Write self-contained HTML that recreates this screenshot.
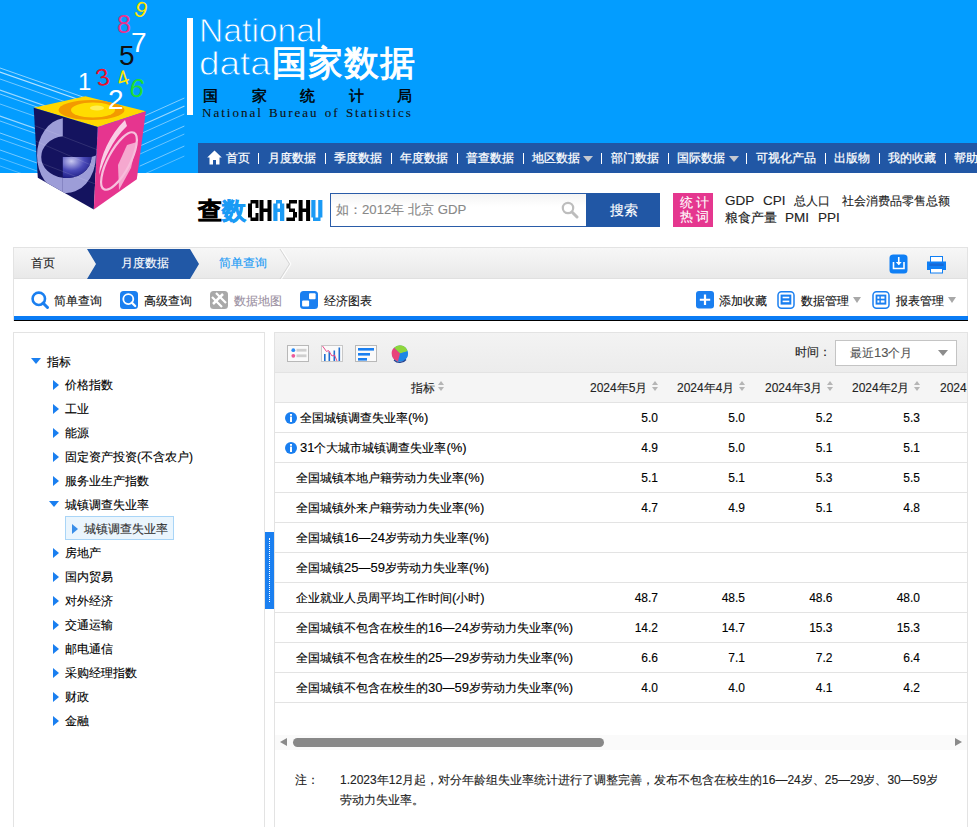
<!DOCTYPE html>
<html><head><meta charset="utf-8">
<style>
*{box-sizing:border-box;margin:0;padding:0}
html,body{width:977px;height:827px;overflow:hidden;background:#fff}
body{position:relative;font-family:"Liberation Sans",sans-serif;font-size:12px;color:#222}
.a,.c,.ti{-webkit-text-stroke:0.12px currentColor}
.a{position:absolute;white-space:nowrap}
#hdr{position:absolute;left:0;top:0;width:977px;height:173px;background:#039dff;z-index:3}
#nav{position:absolute;left:198px;top:143px;width:779px;height:30px;background:#2157a5;color:#fff;font-size:12px;line-height:30px}
#nav span{position:absolute;top:0;white-space:nowrap;-webkit-text-stroke:0.25px #fff}
.arw{position:absolute;top:13px;width:0;height:0;border-left:5px solid transparent;border-right:5px solid transparent;border-top:6px solid #c4c8d0}
/* breadcrumb */
#bc{position:absolute;left:13px;top:247px;width:955px;height:74px;border:1px solid #e3e3e3;border-bottom:none}
#bcbar{position:absolute;left:0;top:0;width:953px;height:31px;background:linear-gradient(#f7f7f7,#e9e9e9);border-bottom:1px solid #e0e0e0}
#tb{position:absolute;left:0;top:31px;width:953px;height:38px;background:#fff}
#bl{position:absolute;left:0;top:68px;width:954px;height:4px;background:#0a7cf5}
#bk{position:absolute;left:0;top:72px;width:954px;height:1px;background:#000}
/* left tree */
#lp{position:absolute;left:13px;top:332px;width:252px;height:500px;border:1px solid #e3e3e3;background:#fff}
.ti{position:absolute;font-size:12px;line-height:16px;color:#000;white-space:nowrap}
.dt{position:absolute;width:0;height:0;border-left:5.5px solid transparent;border-right:5.5px solid transparent;border-top:6px solid #1a7ff0}
.tri{position:absolute;width:0;height:0;border-top:5.5px solid transparent;border-bottom:5.5px solid transparent;border-left:6px solid #1a7ff0}
/* right panel */
#rp{position:absolute;left:274px;top:332px;width:694px;height:500px;border:1px solid #e3e3e3;border-bottom:none;background:#fff;overflow:hidden}
#rtb{position:absolute;left:0;top:0;width:692px;height:40px;background:linear-gradient(#f3f3f3,#ececec);border-bottom:1px solid #e3e3e3}
#th{position:absolute;left:0;top:40px;width:692px;height:30px;background:#f5f5f5;border-bottom:1px solid #e3e3e3}
.row{position:absolute;left:0;width:692px;height:30px;border-bottom:1px solid #e3e3e3}
.c{position:absolute;font-size:12px;line-height:30px;color:#000}
</style></head><body>
<div id="hdr">
<svg class="a" style="left:0;top:0" width="200" height="173" viewBox="0 0 200 173">
  <g stroke="#fff" stroke-linecap="round" fill="none"><path d="M0 68.0 L120 110.0" stroke-opacity="0.55" stroke-width="1.0"/><path d="M0 72.0 L120 114.0" stroke-opacity="0.70" stroke-width="1.2"/><path d="M0 79.0 L120 121.0" stroke-opacity="0.45" stroke-width="1.0"/><path d="M0 90.0 L120 132.0" stroke-opacity="0.60" stroke-width="1.2"/><path d="M0 94.0 L120 136.0" stroke-opacity="0.50" stroke-width="1.0"/><path d="M0 104.0 L120 146.0" stroke-opacity="0.40" stroke-width="1.0"/><path d="M0 116.0 L120 158.0" stroke-opacity="0.60" stroke-width="1.2"/><path d="M0 121.0 L120 163.0" stroke-opacity="0.45" stroke-width="1.0"/><path d="M0 133.0 L120 175.0" stroke-opacity="0.50" stroke-width="1.0"/><path d="M0 139.0 L120 181.0" stroke-opacity="0.40" stroke-width="1.0"/><path d="M0 150.0 L120 192.0" stroke-opacity="0.45" stroke-width="1.0"/><path d="M0 158.0 L120 200.0" stroke-opacity="0.35" stroke-width="1.0"/><path d="M0 166.0 L120 208.0" stroke-opacity="0.30" stroke-width="1.0"/><path d="M140 118.0 L184 98.2" stroke-opacity="0.50" stroke-width="1.0"/><path d="M140 126.0 L184 106.2" stroke-opacity="0.60" stroke-width="1.2"/><path d="M140 134.0 L184 114.2" stroke-opacity="0.45" stroke-width="1.0"/><path d="M140 146.0 L184 126.2" stroke-opacity="0.50" stroke-width="1.0"/><path d="M140 154.0 L184 134.2" stroke-opacity="0.40" stroke-width="1.0"/><path d="M140 166.0 L184 146.2" stroke-opacity="0.45" stroke-width="1.0"/><path d="M140 176.0 L184 156.2" stroke-opacity="0.35" stroke-width="1.0"/></g>
</svg>
<svg class="a" style="left:0;top:0;z-index:2" width="180" height="215" viewBox="0 0 180 215">
  <defs>
    <clipPath id="lf"><polygon points="33.7,107.8 97.8,127 93.8,209.4 37.8,177.7"/></clipPath>
    <clipPath id="rf"><polygon points="97.8,127 145.9,111.2 136.8,179.2 93.8,209.4"/></clipPath>
    <clipPath id="tf"><polygon points="33.7,107.8 85.4,96.3 145.9,111.2 97.8,127"/></clipPath>
    <radialGradient id="bq" cx="0.3" cy="0.2" r="0.9"><stop offset="0" stop-color="#c8c8f0"/><stop offset="0.5" stop-color="#4a4ab8"/><stop offset="1" stop-color="#15157a"/></radialGradient>
  </defs>
  <polygon points="33.7,107.8 85.4,96.3 145.9,111.2 97.8,127" fill="#ffd800"/>
  <g clip-path="url(#tf)">
    <ellipse cx="91.5" cy="110" rx="33" ry="10" fill="#f39a00"/>
    <ellipse cx="93" cy="110" rx="22" ry="7.5" fill="#ffdc00"/>
    <path d="M84 99 L100 99 L104 108 L84 108 Z" fill="#ffd800" opacity="0"/>
    <ellipse cx="97" cy="108" rx="7" ry="2.5" fill="#ffee55"/>
  </g>
  <polygon points="33.7,107.8 97.8,127 93.8,209.4 37.8,177.7" fill="#14135f"/>
  <g clip-path="url(#lf)">
    <path d="M62.8 118.3 A29.5 37.5 0 0 0 62.8 192.7 L62.8 177.8 A25 21 0 0 1 62.8 136.2 Z" fill="#9d9dd8"/>
    <path d="M62.8 192.7 A29.5 37.5 0 0 0 96 155.5 L91.5 157 A25 21 0 0 1 62.8 177.8 Z" fill="#9d9dd8"/>
    <path d="M62.8 157 L91.5 157 A25 21 0 0 1 62.8 177.8 Z" fill="url(#bq)"/>
    <path d="M33 125 L98 150 M33 140 L98 168 M33 160 L98 185" stroke="#fff" stroke-opacity="0.12" stroke-width="1"/>
  </g>
  <polygon points="97.8,127 145.9,111.2 136.8,179.2 93.8,209.4" fill="#e6358f"/>
  <g clip-path="url(#rf)">
    <ellipse cx="119" cy="161" rx="11" ry="32" transform="rotate(28 119 161)" fill="none" stroke="#f7c0dd" stroke-width="2.2"/>
    <path d="M125 120 C110 135 100 155 99 175 C104 160 112 140 127 126 Z" fill="#f9cfe5"/>
    <path d="M127 145 L137 142 L131 168 L119 190 L118 165 Z" fill="#f7bcdb" opacity="0.85"/>
  </g>
  <g font-family="Liberation Sans" stroke="none">
    <text x="135" y="17" font-size="22" fill="#ffe600" transform="rotate(20 141 9)">9</text>
    <text x="117" y="33" font-size="25" fill="#e6338f">8</text>
    <text x="131" y="52" font-size="28" fill="#fff">7</text>
    <text x="119" y="65" font-size="28" fill="#111">5</text>
    <text x="78" y="90" font-size="24" fill="#fff">1</text>
    <text x="96" y="85" font-size="24" fill="#e8112d" transform="rotate(-12 105 77)">3</text>
    <text x="117" y="85" font-size="21" fill="#ffe600" transform="rotate(-18 124 78)">4</text>
    <text x="130" y="97" font-size="26" fill="#22dd33" transform="rotate(12 137 88)">6</text>
    <text x="108" y="109" font-size="28" fill="#fff" stroke="none">2</text>
  </g>
</svg>
  <div class="a" style="left:187px;top:18px;width:6px;height:97px;background:#fff"></div>
  <div class="a" style="left:199px;top:12px;font-size:34px;line-height:36px;color:#fff;transform:scaleX(0.99);transform-origin:0 0;-webkit-text-stroke:0.9px #039dff">National</div>
  <div class="a" style="left:199px;top:45px;font-size:34px;line-height:36px;color:#fff;transform:scaleX(1.085);transform-origin:0 0;-webkit-text-stroke:0.9px #039dff">data</div>
  <div class="a" style="left:272px;top:43px;font-size:35px;line-height:40px;color:#fff;font-weight:normal;letter-spacing:1px;-webkit-text-stroke:1px #fff">国家数据</div>
  <div class="a" style="left:203px;top:86px;font-family:'Liberation Serif',serif;font-size:15px;line-height:20px;color:#000;letter-spacing:33.6px;-webkit-text-stroke:0.45px #000">国家统计局</div>
  <div class="a" style="left:202px;top:105px;font-family:'Liberation Serif',serif;font-size:13px;line-height:16px;color:#111;letter-spacing:2px;word-spacing:1px">National Bureau of Statistics</div>
  <div id="nav"><span style="left:28px">首页</span><span style="left:60px;width:1px;top:10px;height:11px;background:#fff"></span><span style="left:70px">月度数据</span><span style="left:127px;width:1px;top:10px;height:11px;background:#fff"></span><span style="left:136px">季度数据</span><span style="left:193px;width:1px;top:10px;height:11px;background:#fff"></span><span style="left:202px">年度数据</span><span style="left:259px;width:1px;top:10px;height:11px;background:#fff"></span><span style="left:268px">普查数据</span><span style="left:325px;width:1px;top:10px;height:11px;background:#fff"></span><span style="left:334px">地区数据</span><span style="left:403px;width:1px;top:10px;height:11px;background:#fff"></span><span style="left:413px">部门数据</span><span style="left:470px;width:1px;top:10px;height:11px;background:#fff"></span><span style="left:479px">国际数据</span><span style="left:548px;width:1px;top:10px;height:11px;background:#fff"></span><span style="left:558px">可视化产品</span><span style="left:627px;width:1px;top:10px;height:11px;background:#fff"></span><span style="left:636px">出版物</span><span style="left:681px;width:1px;top:10px;height:11px;background:#fff"></span><span style="left:690px">我的收藏</span><span style="left:747px;width:1px;top:10px;height:11px;background:#fff"></span><span style="left:756px">帮助</span><i class="arw" style="left:385px"></i><i class="arw" style="left:531px"></i><svg style="position:absolute;left:9px;top:7px" width="15" height="15" viewBox="0 0 15 15"><path d="M7.5 0.5 L14.8 7.5 L12.5 7.5 L12.5 14.5 L9 14.5 L9 10 L6 10 L6 14.5 L2.5 14.5 L2.5 7.5 L0.2 7.5 Z" fill="#fff"/></svg></div>
</div>

<div id="srch">
  <div class="a" style="left:198px;top:196px;font-size:24px;line-height:30px;font-weight:bold;color:#000;-webkit-text-stroke:0.7px currentColor">查<span style="color:#1a9af5;-webkit-text-stroke:0.7px #1a9af5">数</span></div>
  <svg class="a" style="left:248px;top:200px" width="75" height="21" viewBox="0 0 75 21">
    <g fill="#000">
      <path d="M2.5 0H10.5V3.5H2.5Z M0 3.5H4V17.5H0Z M2.5 17.5H10.5V21H2.5Z M7.5 3.5H10.5V8H7.5Z M7.5 13H10.5V17.5H7.5Z"/>
      <path d="M11.5 0H15.5V21H11.5Z M19.5 0H23.5V21H19.5Z M15.5 8.5H19.5V12H15.5Z"/>
      <path d="M41 0H49V3.5H41Z M38.4 3.5H42.5V8.5H38.4Z M41 8.5H47V12H41Z M45 12H49V17.5H45Z M38.4 17.5H47V21H38.4Z"/>
      <path d="M50.6 0H54.6V21H50.6Z M58.1 0H62.1V21H58.1Z M54.6 8.5H58.1V12H54.6Z"/>
    </g>
    <g fill="#1a9af5">
      <path d="M28 0H34V3.5H28Z M25.3 3.5H29.5V21H25.3Z M32 3.5H36.3V21H32Z M29.5 8.5H32V12H29.5Z"/>
      <path d="M63.3 0H67.5V17.5H63.3Z M70.2 0H74.4V17.5H70.2Z M65 17.5H72.5V21H65Z"/>
    </g>
  </svg>
  <div class="a" style="left:330px;top:193px;width:257px;height:34px;border:1px solid #2a5ca8;border-right:none;background:linear-gradient(#f4f4f4,#fff 40%)"></div>
  <div class="a" style="left:336px;top:201px;font-size:13.2px;line-height:18px;color:#888">如：2012年 北京 GDP</div>
  <svg class="a" style="left:561px;top:201px" width="18" height="18" viewBox="0 0 18 18"><circle cx="7" cy="7" r="5.2" fill="none" stroke="#bdbdbd" stroke-width="2.2"/><path d="M11 11 L16 16" stroke="#bdbdbd" stroke-width="3" stroke-linecap="round"/></svg>
  <div class="a" style="left:586px;top:193px;width:74px;height:34px;background:#2157a5;color:#fff;font-size:14px;line-height:34px;text-align:center;padding-left:1px">搜索</div>
  <div class="a" style="left:673px;top:193px;width:40px;height:34px;background:#e5378f"></div>
  <div class="a" style="left:680px;top:195px;color:#fff;font-size:13px;line-height:15px;letter-spacing:3px">统计</div>
  <div class="a" style="left:680px;top:209px;color:#fff;font-size:13px;line-height:15px;letter-spacing:3px">热词</div>
  <div class="a" style="left:725px;top:192px;font-size:13.5px;line-height:17px;color:#222">GDP</div>
  <div class="a" style="left:763px;top:192px;font-size:13.5px;line-height:17px;color:#222">CPI</div>
  <div class="a" style="left:794px;top:193px;font-size:12px;line-height:17px;color:#222">总人口</div>
  <div class="a" style="left:842px;top:193px;font-size:12px;line-height:17px;color:#222">社会消费品零售总额</div>
  <div class="a" style="left:725px;top:209px;font-size:13px;line-height:17px;color:#222">粮食产量</div>
  <div class="a" style="left:785px;top:209px;font-size:13.5px;line-height:17px;color:#222">PMI</div>
  <div class="a" style="left:818px;top:209px;font-size:13.5px;line-height:17px;color:#222">PPI</div></div>
</div>
<div id="bc">
  <div id="bcbar">
    <div class="a" style="left:17px;top:7px;font-size:12px;line-height:16px;color:#222">首页</div>
    <svg class="a" style="left:0;top:0" width="300" height="31" viewBox="0 0 300 31">
      <polygon points="73,1 176,1 185,16 176,31 73,31 82,16" fill="#2158a6"/>
      <polyline points="266,1 275.5,16 266,31" fill="none" stroke="#d6d6d6" stroke-width="1"/>
      <polyline points="267.5,1 277,16 267.5,31" fill="none" stroke="#fff" stroke-width="1"/>
    </svg>
    <div class="a" style="left:107px;top:7px;font-size:12px;line-height:16px;color:#fff">月度数据</div>
    <div class="a" style="left:205px;top:7px;font-size:12px;line-height:16px;color:#1a9af5">简单查询</div>
    <svg class="a" style="left:875px;top:6px" width="20" height="20" viewBox="0 0 20 20">
      <rect x="0.5" y="0.5" width="18" height="19" rx="3.5" fill="#0f7ff5"/>
      <path d="M4.5 8 V14.5 H15 V8" fill="none" stroke="#fff" stroke-width="1.6"/>
      <path d="M9.75 3 V10.5" stroke="#fff" stroke-width="1.6"/>
      <path d="M6.8 8 L9.75 11.3 L12.7 8 Z" fill="#fff"/>
    </svg>
    <svg class="a" style="left:913px;top:7px" width="20" height="19" viewBox="0 0 20 19">
      <rect x="3.5" y="1.5" width="12" height="6" fill="#fff" stroke="#0f7ff5" stroke-width="1"/>
      <rect x="0" y="6.5" width="19" height="8.5" fill="#0f7ff5"/>
      <rect x="2.5" y="8.5" width="14" height="2.5" fill="#1769d6"/>
      <rect x="3.5" y="13.5" width="12" height="4.5" fill="#fff" stroke="#0f7ff5" stroke-width="1"/>
    </svg>
  </div>
  <div id="tb">
    <svg class="a" style="left:16px;top:12px" width="20" height="20" viewBox="0 0 20 20">
      <circle cx="8.8" cy="7.8" r="6.2" fill="none" stroke="#1a7ff0" stroke-width="2.6"/>
      <path d="M13 12 L17.5 16.5" stroke="#1a7ff0" stroke-width="3" stroke-linecap="round"/>
    </svg>
    <div class="a" style="left:40px;top:14px;font-size:12px;line-height:16px;color:#111">简单查询</div>
    <svg class="a" style="left:106px;top:12px" width="19" height="19" viewBox="0 0 19 19">
      <rect x="0" y="0" width="18" height="18" rx="3.5" fill="#1a7ff0"/>
      <circle cx="8.3" cy="8.1" r="5" fill="none" stroke="#fff" stroke-width="1.8"/>
      <path d="M11.8 11.6 L15.2 15" stroke="#fff" stroke-width="2.2" stroke-linecap="round"/>
    </svg>
    <div class="a" style="left:130px;top:14px;font-size:12px;line-height:16px;color:#111">高级查询</div>
    <svg class="a" style="left:196px;top:12px" width="19" height="19" viewBox="0 0 19 19">
      <rect x="0" y="0" width="18" height="18" rx="3.5" fill="#a9a9a9"/>
      <path d="M2 6 L12 16 M6 2 L16 12" stroke="#fff" stroke-width="2.2"/>
      <path d="M3 13 L13 3" stroke="#fff" stroke-width="2.5"/>
    </svg>
    <div class="a" style="left:220px;top:14px;font-size:12px;line-height:16px;color:#9b90a2">数据地图</div>
    <svg class="a" style="left:286px;top:12px" width="19" height="19" viewBox="0 0 19 19">
      <rect x="0" y="0" width="18" height="18" rx="3.5" fill="#1a7ff0"/>
      <rect x="9" y="2.2" width="6.6" height="6.1" rx="1" fill="#fff"/>
      <rect x="2.1" y="9.4" width="7" height="6.1" rx="1" fill="#fff"/>
    </svg>
    <div class="a" style="left:310px;top:14px;font-size:12px;line-height:16px;color:#111">经济图表</div>
    <svg class="a" style="left:682px;top:12px" width="19" height="19" viewBox="0 0 19 19">
      <rect x="0" y="0" width="18" height="17.5" rx="3" fill="#1a7ff0"/>
      <path d="M9 3.5 V14 M3.8 8.75 H14.2" stroke="#fff" stroke-width="2.2"/>
    </svg>
    <div class="a" style="left:705px;top:14px;font-size:12px;line-height:16px;color:#111">添加收藏</div>
    <svg class="a" style="left:763px;top:12px" width="19" height="19" viewBox="0 0 19 19">
      <rect x="1" y="0.75" width="16" height="16.5" rx="3.5" fill="#fff" stroke="#1a7ff0" stroke-width="1.5"/>
      <rect x="3.6" y="3.6" width="10.7" height="10" fill="#1a7ff0"/>
      <rect x="5.6" y="5.7" width="6.7" height="1.6" fill="#fff"/>
      <rect x="5.6" y="9.6" width="6.7" height="1.6" fill="#fff"/>
    </svg>
    <div class="a" style="left:787px;top:14px;font-size:12px;line-height:16px;color:#111">数据管理</div>
    <i class="a" style="left:839px;top:18px;border-left:4.5px solid transparent;border-right:4.5px solid transparent;border-top:6px solid #a8a8a8"></i>
    <svg class="a" style="left:858px;top:12px" width="19" height="19" viewBox="0 0 19 19">
      <rect x="1" y="0.75" width="16" height="16.5" rx="3.5" fill="#fff" stroke="#1a7ff0" stroke-width="1.5"/>
      <rect x="3.6" y="3.6" width="10.7" height="10" fill="#1a7ff0"/>
      <rect x="5.4" y="5.5" width="2" height="2.2" fill="#fff"/><rect x="8.8" y="5.5" width="3.7" height="2.2" fill="#fff"/>
      <rect x="5.4" y="9.4" width="2" height="2.2" fill="#fff"/><rect x="8.8" y="9.4" width="3.7" height="2.2" fill="#fff"/>
    </svg>
    <div class="a" style="left:882px;top:14px;font-size:12px;line-height:16px;color:#111">报表管理</div>
    <i class="a" style="left:934px;top:18px;border-left:4.5px solid transparent;border-right:4.5px solid transparent;border-top:6px solid #a8a8a8"></i>
  </div>
  <div id="bl"></div>
  <div id="bk"></div>
</div>
<div id="lp">
<i class="dt" style="left:17px;top:25px"></i><div class="ti" style="left:33px;top:21px">指标</div>
<i class="tri" style="left:39px;top:47px"></i><div class="ti" style="left:51px;top:44px">价格指数</div>
<i class="tri" style="left:39px;top:71px"></i><div class="ti" style="left:51px;top:68px">工业</div>
<i class="tri" style="left:39px;top:95px"></i><div class="ti" style="left:51px;top:92px">能源</div>
<i class="tri" style="left:39px;top:119px"></i><div class="ti" style="left:51px;top:116px">固定资产投资(不含农户)</div>
<i class="tri" style="left:39px;top:143px"></i><div class="ti" style="left:51px;top:140px">服务业生产指数</div>
<i class="dt" style="left:35px;top:168px;border-left-width:5.5px;border-right-width:5.5px"></i><div class="ti" style="left:51px;top:164px">城镇调查失业率</div>
<div class="a" style="left:51px;top:183px;width:109px;height:24px;border:1px solid #a9d5f7;background:#eaf5fd"></div><i class="tri" style="left:58px;top:191px;border-left-color:#3a8ee8"></i><div class="ti" style="left:70px;top:188px;color:#333">城镇调查失业率</div>
<i class="tri" style="left:39px;top:215px"></i><div class="ti" style="left:51px;top:212px">房地产</div>
<i class="tri" style="left:39px;top:239px"></i><div class="ti" style="left:51px;top:236px">国内贸易</div>
<i class="tri" style="left:39px;top:263px"></i><div class="ti" style="left:51px;top:260px">对外经济</div>
<i class="tri" style="left:39px;top:287px"></i><div class="ti" style="left:51px;top:284px">交通运输</div>
<i class="tri" style="left:39px;top:311px"></i><div class="ti" style="left:51px;top:308px">邮电通信</div>
<i class="tri" style="left:39px;top:335px"></i><div class="ti" style="left:51px;top:332px">采购经理指数</div>
<i class="tri" style="left:39px;top:359px"></i><div class="ti" style="left:51px;top:356px">财政</div>
<i class="tri" style="left:39px;top:383px"></i><div class="ti" style="left:51px;top:380px">金融</div>
</div>
<div class="a" style="left:265px;top:532px;width:9px;height:77px;background:#1a7ff0"><div style="position:absolute;left:4px;top:6px;width:1px;height:64px;border-left:1px dotted #fff"></div></div>

<div id="rp">
<div id="rtb">
<svg class="a" style="left:11px;top:11px" width="140" height="20" viewBox="0 0 140 20">
  <rect x="1.5" y="1.5" width="21" height="16" fill="#fafafa" stroke="#b8b8b8" stroke-width="1"/>
  <circle cx="7.3" cy="6.2" r="1.9" fill="#2b8df5"/><circle cx="7.3" cy="11.8" r="1.9" fill="#ec5a9a"/>
  <rect x="10.5" y="4.8" width="10" height="2.8" fill="#cfcfcf"/><rect x="10.5" y="10.4" width="10" height="2.8" fill="#cfcfcf"/>
  <rect x="35.5" y="1.5" width="21" height="16" fill="#fafafa" stroke="#c8c8c8" stroke-width="1"/>
  <rect x="38" y="10" width="1.6" height="7" fill="#1e6fd0"/><rect x="42.5" y="7.5" width="1.6" height="9.5" fill="#1e6fd0"/><rect x="47.5" y="6.5" width="1.6" height="10.5" fill="#1e6fd0"/><rect x="52.5" y="3.5" width="1.6" height="13.5" fill="#1e6fd0"/>
  <polyline points="36.5,2 40.5,7.5 42.5,6.5 46,12 48.5,11 51,17" fill="none" stroke="#ea4b8a" stroke-width="1"/>
  <rect x="69.5" y="1.5" width="21" height="16" fill="#fafafa" stroke="#b8b8b8" stroke-width="1"/>
  <rect x="72" y="4" width="16" height="2.6" fill="#1a7ff0"/><rect x="72" y="9" width="12" height="2.6" fill="#1a7ff0"/><rect x="72" y="14" width="9" height="2.6" fill="#1a7ff0"/>
  <g transform="translate(-11 0)"><circle cx="125" cy="9.5" r="8" fill="#2a8ee8"/>
  <path d="M125 9.5 L119 3.8 A8 8 0 0 1 132.6 7.2 Z" fill="#8fd63c"/>
  <path d="M125 9.5 L132.6 7.2 A8 8 0 0 1 123 17.3 Z" fill="#1d86e6"/>
  <path d="M125 9.5 L123 17.3 A8 8 0 0 1 119 3.8 Z" fill="#e8437a"/>
  <path d="M119 16 A8 8 0 0 0 131 15.5" fill="none" stroke="#1f3f8f" stroke-width="1.2"/></g>
</svg>
<div class="a" style="left:520px;top:11px;font-size:12px;line-height:16px;color:#222">时间：</div>
<div class="a" style="left:560px;top:7px;width:122px;height:26px;border:1px solid #c4c4c4;background:#fff"></div>
<div class="a" style="left:575px;top:12px;font-size:12px;line-height:16px;color:#555">最近<span style="font-size:13px">13</span>个月</div>
<i class="a" style="left:663px;top:17px;border-left:5px solid transparent;border-right:5px solid transparent;border-top:6px solid #8c8c8c"></i>
</div>
<div id="th">
<div class="a" style="left:136px;top:7px;font-size:12px;line-height:16px">指标</div><i class="a" style="left:163px;top:8px;border-left:3.5px solid transparent;border-right:3.5px solid transparent;border-bottom:4px solid #b5b5b5"></i><i class="a" style="left:163px;top:14px;border-left:3.5px solid transparent;border-right:3.5px solid transparent;border-top:4px solid #b5b5b5"></i><div class="a" style="left:315px;top:7px;font-size:12px;line-height:16px">2024年5月</div><i class="a" style="left:377px;top:8px;border-left:3.5px solid transparent;border-right:3.5px solid transparent;border-bottom:4px solid #b5b5b5"></i><i class="a" style="left:377px;top:14px;border-left:3.5px solid transparent;border-right:3.5px solid transparent;border-top:4px solid #b5b5b5"></i><div class="a" style="left:402px;top:7px;font-size:12px;line-height:16px">2024年4月</div><i class="a" style="left:464px;top:8px;border-left:3.5px solid transparent;border-right:3.5px solid transparent;border-bottom:4px solid #b5b5b5"></i><i class="a" style="left:464px;top:14px;border-left:3.5px solid transparent;border-right:3.5px solid transparent;border-top:4px solid #b5b5b5"></i><div class="a" style="left:490px;top:7px;font-size:12px;line-height:16px">2024年3月</div><i class="a" style="left:552px;top:8px;border-left:3.5px solid transparent;border-right:3.5px solid transparent;border-bottom:4px solid #b5b5b5"></i><i class="a" style="left:552px;top:14px;border-left:3.5px solid transparent;border-right:3.5px solid transparent;border-top:4px solid #b5b5b5"></i><div class="a" style="left:577px;top:7px;font-size:12px;line-height:16px">2024年2月</div><i class="a" style="left:639px;top:8px;border-left:3.5px solid transparent;border-right:3.5px solid transparent;border-bottom:4px solid #b5b5b5"></i><i class="a" style="left:639px;top:14px;border-left:3.5px solid transparent;border-right:3.5px solid transparent;border-top:4px solid #b5b5b5"></i><div class="a" style="left:665px;top:7px;font-size:12px;line-height:16px">2024年1月</div><i class="a" style="left:727px;top:8px;border-left:3.5px solid transparent;border-right:3.5px solid transparent;border-bottom:4px solid #b5b5b5"></i><i class="a" style="left:727px;top:14px;border-left:3.5px solid transparent;border-right:3.5px solid transparent;border-top:4px solid #b5b5b5"></i></div>
<div class="row" style="top:70px"><svg class="a" style="left:10px;top:9px" width="12" height="12" viewBox="0 0 12 12"><circle cx="6" cy="6" r="6" fill="#1a7ff0"/><rect x="5" y="2" width="2" height="1.8" fill="#fff"/><rect x="5" y="4.6" width="2" height="5.4" fill="#fff"/></svg><div class="c" style="left:25px;top:0">全国城镇调查失业率<span style="font-size:13px">(%)</span></div><div class="c" style="left:323px;top:0;width:60px;text-align:right">5.0</div><div class="c" style="left:410px;top:0;width:60px;text-align:right">5.0</div><div class="c" style="left:497.5px;top:0;width:60px;text-align:right">5.2</div><div class="c" style="left:585px;top:0;width:60px;text-align:right">5.3</div></div>
<div class="row" style="top:100px"><svg class="a" style="left:10px;top:9px" width="12" height="12" viewBox="0 0 12 12"><circle cx="6" cy="6" r="6" fill="#1a7ff0"/><rect x="5" y="2" width="2" height="1.8" fill="#fff"/><rect x="5" y="4.6" width="2" height="5.4" fill="#fff"/></svg><div class="c" style="left:25px;top:0"><span style="font-size:13px">31</span>个大城市城镇调查失业率<span style="font-size:13px">(%)</span></div><div class="c" style="left:323px;top:0;width:60px;text-align:right">4.9</div><div class="c" style="left:410px;top:0;width:60px;text-align:right">5.0</div><div class="c" style="left:497.5px;top:0;width:60px;text-align:right">5.1</div><div class="c" style="left:585px;top:0;width:60px;text-align:right">5.1</div></div>
<div class="row" style="top:130px"><div class="c" style="left:21px;top:0">全国城镇本地户籍劳动力失业率<span style="font-size:13px">(%)</span></div><div class="c" style="left:323px;top:0;width:60px;text-align:right">5.1</div><div class="c" style="left:410px;top:0;width:60px;text-align:right">5.1</div><div class="c" style="left:497.5px;top:0;width:60px;text-align:right">5.3</div><div class="c" style="left:585px;top:0;width:60px;text-align:right">5.5</div></div>
<div class="row" style="top:160px"><div class="c" style="left:21px;top:0">全国城镇外来户籍劳动力失业率<span style="font-size:13px">(%)</span></div><div class="c" style="left:323px;top:0;width:60px;text-align:right">4.7</div><div class="c" style="left:410px;top:0;width:60px;text-align:right">4.9</div><div class="c" style="left:497.5px;top:0;width:60px;text-align:right">5.1</div><div class="c" style="left:585px;top:0;width:60px;text-align:right">4.8</div></div>
<div class="row" style="top:190px"><div class="c" style="left:21px;top:0">全国城镇<span style="font-size:13px">16</span>—<span style="font-size:13px">24</span>岁劳动力失业率<span style="font-size:13px">(%)</span></div></div>
<div class="row" style="top:220px"><div class="c" style="left:21px;top:0">全国城镇<span style="font-size:13px">25</span>—<span style="font-size:13px">59</span>岁劳动力失业率<span style="font-size:13px">(%)</span></div></div>
<div class="row" style="top:250px"><div class="c" style="left:21px;top:0">企业就业人员周平均工作时间<span style="font-size:13px">(</span>小时<span style="font-size:13px">)</span></div><div class="c" style="left:323px;top:0;width:60px;text-align:right">48.7</div><div class="c" style="left:410px;top:0;width:60px;text-align:right">48.5</div><div class="c" style="left:497.5px;top:0;width:60px;text-align:right">48.6</div><div class="c" style="left:585px;top:0;width:60px;text-align:right">48.0</div></div>
<div class="row" style="top:280px"><div class="c" style="left:21px;top:0">全国城镇不包含在校生的<span style="font-size:13px">16</span>—<span style="font-size:13px">24</span>岁劳动力失业率<span style="font-size:13px">(%)</span></div><div class="c" style="left:323px;top:0;width:60px;text-align:right">14.2</div><div class="c" style="left:410px;top:0;width:60px;text-align:right">14.7</div><div class="c" style="left:497.5px;top:0;width:60px;text-align:right">15.3</div><div class="c" style="left:585px;top:0;width:60px;text-align:right">15.3</div></div>
<div class="row" style="top:310px"><div class="c" style="left:21px;top:0">全国城镇不包含在校生的<span style="font-size:13px">25</span>—<span style="font-size:13px">29</span>岁劳动力失业率<span style="font-size:13px">(%)</span></div><div class="c" style="left:323px;top:0;width:60px;text-align:right">6.6</div><div class="c" style="left:410px;top:0;width:60px;text-align:right">7.1</div><div class="c" style="left:497.5px;top:0;width:60px;text-align:right">7.2</div><div class="c" style="left:585px;top:0;width:60px;text-align:right">6.4</div></div>
<div class="row" style="top:340px"><div class="c" style="left:21px;top:0">全国城镇不包含在校生的<span style="font-size:13px">30</span>—<span style="font-size:13px">59</span>岁劳动力失业率<span style="font-size:13px">(%)</span></div><div class="c" style="left:323px;top:0;width:60px;text-align:right">4.0</div><div class="c" style="left:410px;top:0;width:60px;text-align:right">4.0</div><div class="c" style="left:497.5px;top:0;width:60px;text-align:right">4.1</div><div class="c" style="left:585px;top:0;width:60px;text-align:right">4.2</div></div>
<div class="a" style="left:0;top:402px;width:692px;height:15px;background:#fafafa"></div>
<div class="a" style="left:5px;top:405px;width:0;height:0;border-top:4.5px solid transparent;border-bottom:4.5px solid transparent;border-right:7.5px solid #8a8a8a"></div>
<div class="a" style="left:18px;top:405px;width:311px;height:9px;border-radius:4.5px;background:#888"></div>
<div class="a" style="left:680px;top:405px;width:0;height:0;border-top:4.5px solid transparent;border-bottom:4.5px solid transparent;border-left:7.5px solid #8a8a8a"></div>
<div class="a" style="left:20px;top:437px;font-size:12px;line-height:20px;color:#222">注：</div>
<div class="a" style="left:65px;top:437px;font-size:12px;line-height:20px;color:#222">1.2023年12月起，对分年龄组失业率统计进行了调整完善，发布不包含在校生的16—24岁、25—29岁、30—59岁<br>劳动力失业率。</div>
</div>
</body></html>
